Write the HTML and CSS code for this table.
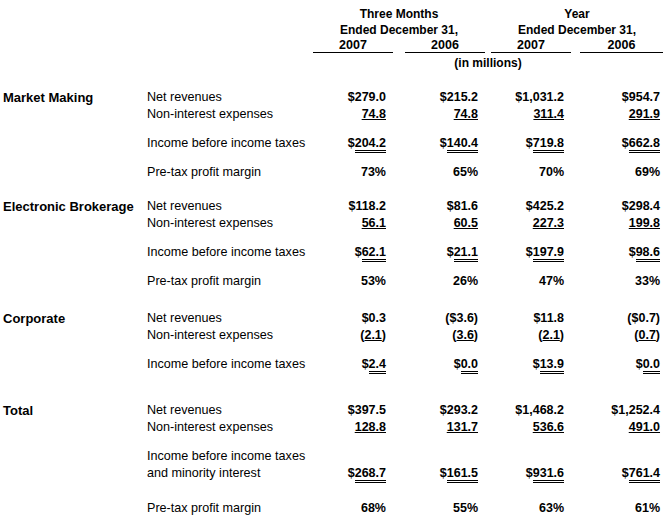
FILE: index.html
```html
<!DOCTYPE html>
<html>
<head>
<meta charset="utf-8">
<link rel="stylesheet" href="styles.css">
</head>
<body>
<table class="fin">
  <colgroup>
    <col class="w-lab1"><col class="w-lab2"><col class="w-num"><col class="w-g1"><col class="w-num"><col class="w-g2"><col class="w-num"><col class="w-g3"><col class="w-num4">
  </colgroup>
  <tr class="hrow"><td></td><td></td><td colspan="3" class="hc">Three Months</td><td></td><td colspan="3" class="hc">Year</td></tr>
  <tr class="hrow"><td></td><td></td><td colspan="3" class="hc">Ended December 31,</td><td></td><td colspan="3" class="hc">Ended December 31,</td></tr>
  <tr class="yrow"><td></td><td></td><td class="yr">2007</td><td></td><td class="yr">2006</td><td></td><td class="yr">2007</td><td></td><td class="yr">2006</td></tr>
  <tr class="sp2"><td colspan="9"></td></tr>
  <tr class="row"><td></td><td></td><td colspan="7" class="hc">(in millions)</td></tr>
  <tr class="sp17"><td colspan="9"></td></tr>

  <tr class="row"><td class="sec">Market Making</td><td class="lab">Net revenues</td><td class="n">$279.0</td><td></td><td class="n">$215.2</td><td></td><td class="n">$1,031.2</td><td></td><td class="n n4">$954.7</td></tr>
  <tr class="row"><td></td><td class="lab">Non-interest expenses</td><td class="n"><span class="u1">74.8</span></td><td></td><td class="n"><span class="u1">74.8</span></td><td></td><td class="n"><span class="u1">311.4</span></td><td></td><td class="n n4"><span class="u1">291.9</span></td></tr>
  <tr class="sp12"><td colspan="9"></td></tr>
  <tr class="row"><td></td><td class="lab">Income before income taxes</td><td class="n">$<span class="u2">204.2</span></td><td></td><td class="n">$<span class="u2">140.4</span></td><td></td><td class="n">$<span class="u2">719.8</span></td><td></td><td class="n n4">$<span class="u2">662.8</span></td></tr>
  <tr class="sp12"><td colspan="9"></td></tr>
  <tr class="row"><td></td><td class="lab">Pre-tax profit margin</td><td class="n">73%</td><td></td><td class="n">65%</td><td></td><td class="n">70%</td><td></td><td class="n n4">69%</td></tr>
  <tr class="sp17"><td colspan="9"></td></tr>

  <tr class="row"><td class="sec">Electronic Brokerage</td><td class="lab">Net revenues</td><td class="n">$118.2</td><td></td><td class="n">$81.6</td><td></td><td class="n">$425.2</td><td></td><td class="n n4">$298.4</td></tr>
  <tr class="row"><td></td><td class="lab">Non-interest expenses</td><td class="n"><span class="u1">56.1</span></td><td></td><td class="n"><span class="u1">60.5</span></td><td></td><td class="n"><span class="u1">227.3</span></td><td></td><td class="n n4"><span class="u1">199.8</span></td></tr>
  <tr class="sp12"><td colspan="9"></td></tr>
  <tr class="row"><td></td><td class="lab">Income before income taxes</td><td class="n">$<span class="u2">62.1</span></td><td></td><td class="n">$<span class="u2">21.1</span></td><td></td><td class="n">$<span class="u2">197.9</span></td><td></td><td class="n n4">$<span class="u2">98.6</span></td></tr>
  <tr class="sp12"><td colspan="9"></td></tr>
  <tr class="row"><td></td><td class="lab">Pre-tax profit margin</td><td class="n">53%</td><td></td><td class="n">26%</td><td></td><td class="n">47%</td><td></td><td class="n n4">33%</td></tr>
  <tr class="sp20"><td colspan="9"></td></tr>

  <tr class="row"><td class="sec">Corporate</td><td class="lab">Net revenues</td><td class="n">$0.3</td><td></td><td class="n">($3.6)</td><td></td><td class="n">$11.8</td><td></td><td class="n n4">($0.7)</td></tr>
  <tr class="row"><td></td><td class="lab">Non-interest expenses</td><td class="n">(<span class="u1">2.1</span>)</td><td></td><td class="n">(<span class="u1">3.6</span>)</td><td></td><td class="n">(<span class="u1">2.1</span>)</td><td></td><td class="n n4">(<span class="u1">0.7</span>)</td></tr>
  <tr class="sp12"><td colspan="9"></td></tr>
  <tr class="row"><td></td><td class="lab">Income before income taxes</td><td class="n">$<span class="u2">2.4</span></td><td></td><td class="n">$<span class="u2">0.0</span></td><td></td><td class="n">$<span class="u2">13.9</span></td><td></td><td class="n n4">$<span class="u2">0.0</span></td></tr>
  <tr class="sp29"><td colspan="9"></td></tr>

  <tr class="row"><td class="sec">Total</td><td class="lab">Net revenues</td><td class="n">$397.5</td><td></td><td class="n">$293.2</td><td></td><td class="n">$1,468.2</td><td></td><td class="n n4">$1,252.4</td></tr>
  <tr class="row"><td></td><td class="lab">Non-interest expenses</td><td class="n"><span class="u1">128.8</span></td><td></td><td class="n"><span class="u1">131.7</span></td><td></td><td class="n"><span class="u1">536.6</span></td><td></td><td class="n n4"><span class="u1">491.0</span></td></tr>
  <tr class="sp12"><td colspan="9"></td></tr>
  <tr class="row"><td></td><td class="lab">Income before income taxes</td><td colspan="7"></td></tr>
  <tr class="row"><td></td><td class="lab">and minority interest</td><td class="n">$<span class="u2">268.7</span></td><td></td><td class="n">$<span class="u2">161.5</span></td><td></td><td class="n">$<span class="u2">931.6</span></td><td></td><td class="n n4">$<span class="u2">761.4</span></td></tr>
  <tr class="sp18"><td colspan="9"></td></tr>
  <tr class="row"><td></td><td class="lab">Pre-tax profit margin</td><td class="n">68%</td><td></td><td class="n">55%</td><td></td><td class="n">63%</td><td></td><td class="n n4">61%</td></tr>
</table>
</body>
</html>
```

FILE: styles.css
```css
html, body {
  margin: 0;
  padding: 0;
  background: #ffffff;
}

body {
  padding-top: 6px;
  font-family: "Liberation Sans", Arial, sans-serif;
  color: #000000;
}

.fin {
  border-collapse: collapse;
  table-layout: fixed;
  width: 663px;
}

.fin td {
  padding: 0;
  white-space: nowrap;
  font-size: 12px;
  vertical-align: middle;
}

.w-lab1 { width: 147px; }
.w-lab2 { width: 166px; }
.w-num { width: 80px; }
.w-num4 { width: 83px; }
.w-g1 { width: 12px; }
.w-g2 { width: 6px; }
.w-g3 { width: 9px; }

.hrow td {
  height: 16px;
  line-height: 16px;
}

.yrow td {
  height: 14px;
  line-height: 14px;
}

.row td {
  height: 17px;
  line-height: 17px;
}

.hc {
  text-align: center;
  font-weight: bold;
}

.fin td.yr {
  text-align: center;
  font-weight: bold;
  font-size: 12.5px;
  border-bottom: 1px solid #000000;
}

.fin td.lab {
  font-size: 12.6px;
}

.fin td.sec {
  font-weight: bold;
  font-size: 13px;
  padding-left: 3px;
}

.fin td.n {
  text-align: right;
  font-weight: bold;
  font-size: 12.5px;
  padding-right: 7px;
}

.fin td.n4 {
  padding-right: 3px;
}

.u1 {
  text-decoration: underline;
}

.u2 {
  border-bottom: 3px double #000000;
}

.sp2 td { height: 2px; }
.sp12 td { height: 12px; }
.sp17 td { height: 17px; }
.sp18 td { height: 18px; }
.sp20 td { height: 20px; }
.sp29 td { height: 29px; }
```
